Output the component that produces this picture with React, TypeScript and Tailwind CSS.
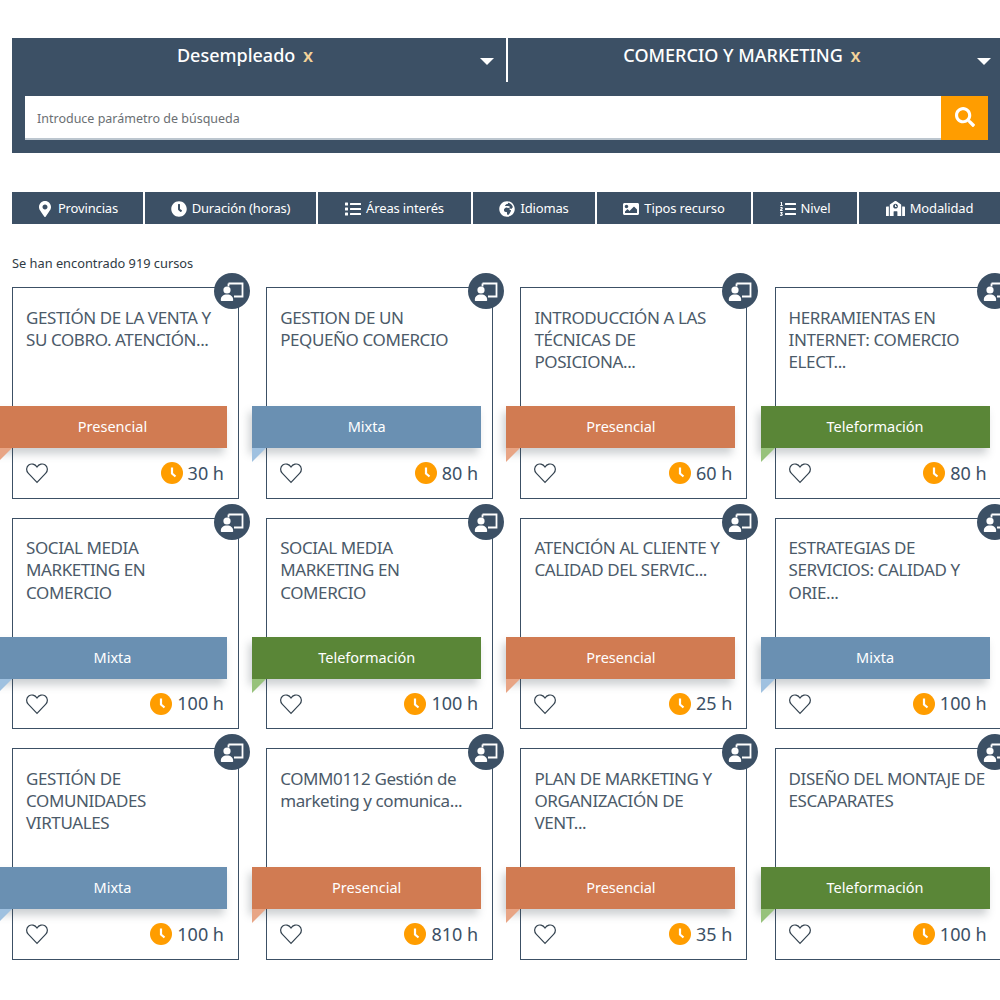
import React from "react";
import { FaMapMarkerAlt, FaClock, FaGlobeAfrica, FaImage, FaSearch, FaListOl, FaList, FaSchool } from "react-icons/fa";

const font = "font-['Noto_Sans','Liberation_Sans',sans-serif]";

type Kind = "Presencial" | "Mixta" | "Teleformación";
const kinds: Record<Kind, { bar: string; fold: string }> = {
  Presencial: { bar: "bg-[#d17b52]", fold: "border-t-[#e8a585]" },
  Mixta: { bar: "bg-[#6a90b2]", fold: "border-t-[#9fc1e0]" },
  Teleformación: { bar: "bg-[#5a8637]", fold: "border-t-[#97c27b]" },
};

const courses: { t: string[]; k: Kind; h: string }[] = [
  { t: ["GESTIÓN DE LA VENTA Y", "SU COBRO. ATENCIÓN..."], k: "Presencial", h: "30 h" },
  { t: ["GESTION DE UN", "PEQUEÑO COMERCIO"], k: "Mixta", h: "80 h" },
  { t: ["INTRODUCCIÓN A LAS", "TÉCNICAS DE", "POSICIONA..."], k: "Presencial", h: "60 h" },
  { t: ["HERRAMIENTAS EN", "INTERNET: COMERCIO", "ELECT..."], k: "Teleformación", h: "80 h" },
  { t: ["SOCIAL MEDIA", "MARKETING EN", "COMERCIO"], k: "Mixta", h: "100 h" },
  { t: ["SOCIAL MEDIA", "MARKETING EN", "COMERCIO"], k: "Teleformación", h: "100 h" },
  { t: ["ATENCIÓN AL CLIENTE Y", "CALIDAD DEL SERVIC..."], k: "Presencial", h: "25 h" },
  { t: ["ESTRATEGIAS DE", "SERVICIOS: CALIDAD Y", "ORIE..."], k: "Mixta", h: "100 h" },
  { t: ["GESTIÓN DE", "COMUNIDADES", "VIRTUALES"], k: "Mixta", h: "100 h" },
  { t: ["COMM0112 Gestión de", "marketing y comunica..."], k: "Presencial", h: "810 h" },
  { t: ["PLAN DE MARKETING Y", "ORGANIZACIÓN DE", "VENT..."], k: "Presencial", h: "35 h" },
  { t: ["DISEÑO DEL MONTAJE DE", "ESCAPARATES"], k: "Teleformación", h: "100 h" },
];

function Presenter() {
  return (
    <svg viewBox="0 0 24 24" className="w-[24px] h-[24px]" fill="none">
      <path d="M8.500 4.500h14v13h-8.500" stroke="#fff" strokeWidth="1.800" />
      <path d="M8.500 4.500v3" stroke="#fff" strokeWidth="1.800" />
      <circle cx="7" cy="11" r="3.600" fill="#fff" />
      <path d="M0.800 21c0-3.800 2.400-5.600 6.200-5.600s6.200 1.800 6.200 5.600c0 .6-.4 1-1 1H1.800c-.6 0-1-.4-1-1z" fill="#fff" />
    </svg>
  );
}

function Heart() {
  return (
    <svg viewBox="0 0 24 24" className="w-[22px] h-[22px]" fill="none" stroke="#33424f" strokeWidth="1.300">
      <path d="M12 22.200 2.400 12.200C-.2 9.400.4 5.200 3 3.300c2.800-2 6.800-1.200 9 2.200 2.200-3.400 6.200-4.200 9-2.200 2.600 1.900 3.200 6.100.6 8.900z" />
    </svg>
  );
}

function Card({ c }: { c: (typeof courses)[number] }) {
  const k = kinds[c.k];
  return (
    <div className="relative h-[211.500px] w-[227px] shrink-0 border border-[#3c5065] bg-white flex flex-col">
      <div className="absolute -top-[15px] -right-[12px] w-[36px] h-[36px] rounded-full bg-[#3c5065] flex items-center justify-center">
        <Presenter />
      </div>
      <div className="h-[118px] pl-[13px] pt-[18.500px] text-[17px] leading-[22.300px] text-[#4b5a69] tracking-[-0.4px]">
        {c.t.map((l, i) => (
          <div key={i} className="whitespace-nowrap">{l}</div>
        ))}
      </div>
      <div className={`relative -ml-[15px] mr-[11px] h-[42px] ${k.bar} flex items-center justify-center text-white text-[14.500px] shadow-[-3px_6px_8px_rgba(60,70,80,0.25)]`}>
        {c.k}
        <div className={`absolute left-0 top-full w-0 h-0 border-t-[14px] border-l-[14px] border-l-transparent ${k.fold} scale-x-[-1]`} />
      </div>
      <div className="flex-1 flex items-center justify-between pl-[13px] pr-[14px] pt-[1px]">
        <Heart />
        <div className="flex items-center gap-[5px] text-[18px] text-[#3c5065]">
          <span className="w-[22px] h-[22px] rounded-full bg-[#ff9d00] flex items-center justify-center">
            <svg viewBox="0 0 22 22" className="w-[22px] h-[22px]"><path d="M11 5.500v6l3.500 3" stroke="#fff" strokeWidth="2.200" fill="none" /></svg>
          </span>
          {c.h}
        </div>
      </div>
    </div>
  );
}

function Tab({ w, icon, label }: { w: string; icon: React.ReactNode; label: string }) {
  return (
    <div className={`${w} h-[32px] bg-[#3c5065] flex items-center justify-center gap-[5px] text-white text-[13px] tracking-[-0.15px] shrink-0 pt-[1px]`}>
      {icon}
      {label}
    </div>
  );
}

function Selector({ label, className, caret }: { label: string; className: string; caret: string }) {
  return (
    <div className={`relative h-[44px] flex items-center justify-center text-[18px] font-medium text-white ${className}`}>
      <span className="-mt-[9px] whitespace-nowrap">
        {label} <span className="ml-[3px] font-semibold text-[#f3d39a]">x</span>
      </span>
      <div className={`absolute ${caret} top-[20px] w-0 h-0 border-x-[7px] border-x-transparent border-t-[7px] border-t-white`} />
    </div>
  );
}

export default function App() {
  return (
    <div className={`w-[1000px] h-[1000px] overflow-hidden bg-white pl-[12px] pt-[38px] ${font}`}>
      <div className="w-[988px] h-[115px] bg-[#3c5065]">
        <div className="flex">
          <Selector label="Desempleado" className="w-[494px] pr-[28px]" caret="right-[12px]" />
          <div className="w-[2px] h-[44px] bg-white" />
          <Selector label="COMERCIO Y MARKETING" className="flex-1 pr-[24px]" caret="right-[9px]" />
        </div>
        <div className="flex mt-[14px] ml-[13px] mr-[12px] h-[44px]">
          <div className="flex-1 bg-white border-b-2 border-[#bcc6cf] flex items-center pl-[12px] pt-[4px] text-[12.500px] text-[#6b6f73]">
            Introduce parámetro de búsqueda
          </div>
          <div className="w-[47px] bg-[#ff9d00] flex items-center justify-center pb-[3px]">
            <FaSearch className="text-white text-[20px]" />
          </div>
        </div>
      </div>

      <div className="flex gap-[2px] mt-[39px]">
        <Tab w="w-[131px]" icon={<FaMapMarkerAlt className="text-[16px]" />} label="Provincias" />
        <Tab w="w-[171px]" icon={<FaClock className="text-[16px]" />} label="Duración (horas)" />
        <Tab w="w-[153px]" icon={<FaList className="text-[16px]" />} label="Áreas interés" />
        <Tab w="w-[122px]" icon={<FaGlobeAfrica className="text-[16px]" />} label="Idiomas" />
        <Tab w="w-[154px]" icon={<FaImage className="text-[16px]" />} label="Tipos recurso" />
        <Tab w="w-[104px]" icon={<FaListOl className="text-[16px]" />} label="Nivel" />
        <Tab w="w-[141px]" icon={<FaSchool className="text-[19px]" />} label="Modalidad" />
      </div>

      <div className="mt-[30px] h-[18px] leading-[18px] text-[12.800px] text-[#2f3a44]">Se han encontrado 919 cursos</div>

      <div className="mt-[15px] grid grid-cols-[repeat(4,227px)] gap-x-[27.200px] gap-y-[19px]">
        {courses.map((c, i) => (
          <Card key={i} c={c} />
        ))}
      </div>
    </div>
  );
}
